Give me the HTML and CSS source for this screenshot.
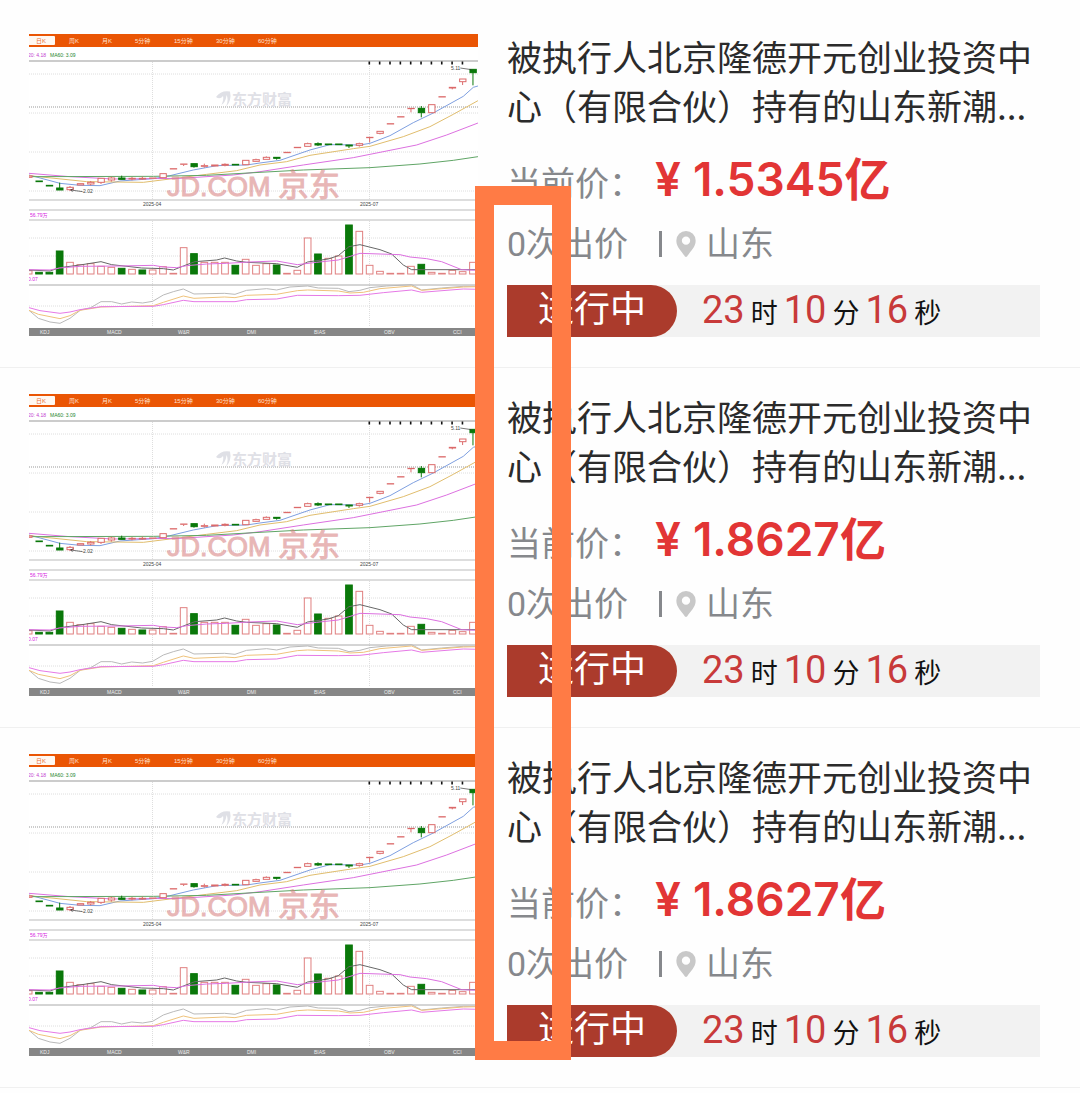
FILE: index.html
```html
<!DOCTYPE html>
<html lang="zh-CN">
<head>
<meta charset="utf-8">
<meta name="viewport" content="width=device-width, initial-scale=1">
<title>司法拍卖</title>
<link rel="stylesheet" href="styles.css">
</head>
<body>
<main class="list">
  <article class="card">
    <div class="chart"></div>
    <div class="info">
      <h2 class="title"><a href="#lot-1">被执行人北京隆德开元创业投资中<br>心（有限合伙）持有的山东新潮...</a></h2>
      <p class="price"><span class="label">当前价：</span><strong class="amount"><span class="yen">¥</span>1.5345<span class="unit">亿</span></strong></p>
      <p class="meta"><span>0次出价</span><span class="divider"></span><svg class="pin" viewBox="0 0 19 25"><path fill-rule="evenodd" d="M9.500 0A9.300 9.300 0 0 0 .2 9.300C.2 15.500 5 19 8.300 24.200Q9.500 25.600 10.700 24.200C14 19 18.800 15.500 18.800 9.300A9.300 9.300 0 0 0 9.500 0ZM9.500 5.300a4 4 0 1 1 0 8a4 4 0 0 1 0-8Z"/></svg><span>山东</span></p>
      <div class="status"><span class="tag">进行中</span><p class="timer"><b>23</b><span>时</span><b>10</b><span>分</span><b>16</b><span>秒</span></p></div>
    </div>
  </article>
  <article class="card">
    <div class="chart"></div>
    <div class="info">
      <h2 class="title"><a href="#lot-2">被执行人北京隆德开元创业投资中<br>心（有限合伙）持有的山东新潮...</a></h2>
      <p class="price"><span class="label">当前价：</span><strong class="amount"><span class="yen">¥</span>1.8627<span class="unit">亿</span></strong></p>
      <p class="meta"><span>0次出价</span><span class="divider"></span><svg class="pin" viewBox="0 0 19 25"><path fill-rule="evenodd" d="M9.500 0A9.300 9.300 0 0 0 .2 9.300C.2 15.500 5 19 8.300 24.200Q9.500 25.600 10.700 24.200C14 19 18.800 15.500 18.800 9.300A9.300 9.300 0 0 0 9.500 0ZM9.500 5.300a4 4 0 1 1 0 8a4 4 0 0 1 0-8Z"/></svg><span>山东</span></p>
      <div class="status"><span class="tag">进行中</span><p class="timer"><b>23</b><span>时</span><b>10</b><span>分</span><b>16</b><span>秒</span></p></div>
    </div>
  </article>
  <article class="card">
    <div class="chart"></div>
    <div class="info">
      <h2 class="title"><a href="#lot-3">被执行人北京隆德开元创业投资中<br>心（有限合伙）持有的山东新潮...</a></h2>
      <p class="price"><span class="label">当前价：</span><strong class="amount"><span class="yen">¥</span>1.8627<span class="unit">亿</span></strong></p>
      <p class="meta"><span>0次出价</span><span class="divider"></span><svg class="pin" viewBox="0 0 19 25"><path fill-rule="evenodd" d="M9.500 0A9.300 9.300 0 0 0 .2 9.300C.2 15.500 5 19 8.300 24.200Q9.500 25.600 10.700 24.200C14 19 18.800 15.500 18.800 9.300A9.300 9.300 0 0 0 9.500 0ZM9.500 5.300a4 4 0 1 1 0 8a4 4 0 0 1 0-8Z"/></svg><span>山东</span></p>
      <div class="status"><span class="tag">进行中</span><p class="timer"><b>23</b><span>时</span><b>10</b><span>分</span><b>16</b><span>秒</span></p></div>
    </div>
  </article>
  <div class="marker"></div>
</main>
<script src="chart.js"></script>
</body>
</html>
```
FILE: styles.css
```css
* {
  box-sizing: border-box;
}

body {
  margin: 0;
  background: #fefefe;
  color: #2b2b2b;
  font-family: Roboto, "Noto Sans CJK SC", sans-serif;
}

h2,
p {
  margin: 0;
  font-weight: 400;
}

.list {
  position: relative;
  padding-top: 8px;
}

.card {
  display: grid;
  grid-template-columns: 449fr 533fr;
  column-gap: 29px;
  align-items: end;
  padding: 23px 40px 30px 29px;
  border-bottom: 1px solid #f0f0f0;
}

/* Chart */
.chart svg {
  display: block;
  width: 100%;
}

.chart text {
  font-family: "Liberation Sans", "Noto Sans CJK SC", sans-serif;
  font-size: 6px;
}

.chart .tab {
  fill: #ffe3d0;
}

.chart .tab-on {
  fill: #e8703a;
}

.chart .small {
  font-size: 5px;
}

.chart .brand {
  font-size: 15px;
  font-weight: 700;
  fill: #dfe0e6;
}

.chart .jd {
  font-size: 27px;
  fill: #d98787;
  stroke: #d98787;
  stroke-width: 1;
  opacity: 0.6;
}

.chart .jd-cn {
  font-size: 31px;
}

/* Lot details */
.info {
  display: flex;
  flex-direction: column;
  min-width: 0;
}

.title {
  font-family: "Noto Sans CJK SC", sans-serif;
  font-size: 35px;
  line-height: 49px;
  white-space: nowrap;
}

.title a {
  color: inherit;
  text-decoration: none;
}

.price {
  display: flex;
  align-items: baseline;
  height: 56px;
  margin-top: 22px;
  line-height: 56px;
  white-space: nowrap;
}

.label {
  width: 148px;
  font-size: 34px;
  color: #86888c;
}

.amount {
  font-family: Inter, "Noto Sans CJK SC", sans-serif;
  font-size: 46px;
  font-weight: 600;
  color: #e23535;
}

.yen {
  margin-right: 12px;
}

.meta {
  display: flex;
  align-items: center;
  height: 48px;
  margin-top: 13px;
  font-size: 34px;
  line-height: 48px;
  color: #86888c;
}

.divider {
  width: 3px;
  height: 26px;
  margin: 0 14px 0 31px;
  background: #86888c;
}

.pin {
  width: 20px;
  height: 26px;
  margin-right: 10px;
  fill: #c8c8c8;
}

.status {
  display: flex;
  height: 52px;
  margin-top: 17px;
  background: #f2f2f2;
}

.tag {
  width: 170px;
  border-radius: 0 26px 26px 0;
  background: #ab3b2c;
  color: #fff;
  font-size: 36px;
  line-height: 50px;
  text-align: center;
}

.timer {
  display: flex;
  align-items: baseline;
  gap: 6px;
  padding-left: 25px;
  line-height: 50px;
  color: #111;
}

.timer b {
  font-size: 38px;
  font-weight: 400;
  color: #c83a3a;
}

.timer span {
  font-size: 27px;
}

/* Hand-drawn highlight across the three lots */
.marker {
  position: absolute;
  top: 186px;
  bottom: 28px;
  left: 475px;
  width: 96px;
  border: 19px solid #ff7b45;
}
```
FILE: chart.js
```js
// Stock chart thumbnail: candles, volume and indicator panes.
const STEP = 31;
const FIRST = 26;
const RED = '#dc6a6a';
const GREEN = '#0a780a';

// [colour, body top, body bottom, wick top, wick bottom]
const candles = [
  ['r',123,127],['g',138,140],['g',151,153],['g',159,165,143,165],['r',157,164,153,168],['r',146,150],
  ['r',142,147,138,151],['r',130,142,130,147],['r',129,135,125,140],['g',129,133,122,133],['r',130,132,126,136],
  ['r',130,132,125,134],['r',129,130],['r',116,128],['r',101,102],['r',87,88,87,93],['g',86,95,86,98],
  ['r',92,94,86,98],['r',90,93],['r',88,91,85,94],['g',88,90],['r',76,89],['r',74,79,71,81],['r',67,73,64,73],
  ['g',67,70,67,74],['r',52,53],['r',37,38],['r',26,34,23,34],['g',26,30,22,33],['g',27,29],['g',27,29],
  ['g',30,33,30,39],['r',26,31,23,35],['r',7,8,7,22],['r',-11,-5,-11,-2],['r',-34,-33],['r',-55,-54],
  ['r',-80,-79,-80,-68],['g',-80,-67,-87,-53],['r',-91,-67],['r',-115,-114],['r',-143,-141,-143,-137],
  ['r',-168,-160,-168,-150],['g',-197,-187,-197,-149]
];

const volumes = [197,-202,-202,-138,172,179,176,184,187,-190,193,-195,195,185,205,128,-146,172,172,172,-181,163,181,
  176,-180,205,196,99,-147,160,153,-60,79,181,199,205,205,184,-178,202,205,196,200,172];

const priceLines = [
  ['#7d9fe0','27,120 120,145 180,151 240,152 300,138 400,131 450,122 520,105 590,92 680,90 720,84 780,76 870,45 930,29 1020,30 1050,25 1110,2 1180,-37 1240,-66 1330,-116 1360,-143 1374,-147'],
  ['#e0bd6c','27,122 200,140 370,142 450,132 560,118 650,107 720,90 800,80 870,61 1000,41 1050,34 1150,5 1230,-25 1300,-62 1374,-103'],
  ['#dc6fe0','27,115 150,125 280,132 480,130 640,120 720,110 850,90 1000,68 1050,58 1190,30 1280,0 1374,-36'],
  ['#5fa565','27,125 400,124 560,121 720,112 850,105 1050,98 1200,87 1300,76 1374,65']
];

const lowerLines = [
  ['#666','27,195 90,198 119,188 180,180 243,170 275,179 330,185 365,189 430,191 460,195 490,183 525,170 590,165 614,159 650,168 680,172 770,176 832,187 863,171 925,162 955,152 987,125 1020,119 1080,134 1115,147 1150,180 1175,194 1374,194'],
  ['#dc6fe0','27,194 90,195 119,189 180,184 300,183 400,181 430,186 470,188 500,182 560,177 620,175 690,171 770,168 832,179 890,172 955,165 1020,145 1140,149 1170,156 1220,161 1265,170 1325,194 1374,196'],
  ['#b9b9b9','27,316 55,340 90,351 120,355 150,340 182,315 212,308 243,290 275,290 305,297 335,291 368,294 398,289 430,270 460,260 490,252 522,267 614,265 645,268 680,256 740,251 770,255 810,246 863,243 895,249 955,250 987,260 1020,256 1050,248 1100,243 1175,239 1205,255 1265,249 1330,244 1374,244'],
  ['#efc27a','27,316 55,328 120,341 150,332 180,316 243,306 400,302 430,292 490,273 522,280 614,276 645,278 680,271 770,268 832,257 863,255 955,258 990,264 1030,262 1080,251 1175,243 1205,256 1330,246 1374,245'],
  ['#e678e6','27,308 60,317 120,325 150,321 180,314 243,305 400,304 430,299 490,286 522,290 645,290 680,284 770,282 832,271 955,272 1020,271 1090,263 1175,255 1205,262 1330,252 1374,253']
];

const lines = set => set.map(([c, p]) =>
  `<polyline points="${p}" fill="none" stroke="${c}" stroke-width="3"/>`).join('');

const drawCandles = candles.map(([c, top, bottom, high, low], i) => {
  const x = FIRST + i * STEP;
  const colour = c === 'g' ? GREEN : RED;
  const wick = high === undefined ? '' : c === 'g'
    ? `M${x} ${high}V${low}` : `M${x} ${high}V${top}M${x} ${bottom}V${low}`;
  return `<path d="${wick}" stroke="${colour}" stroke-width="3"/>` +
    `<rect x="${x - 9}" y="${top}" width="19" height="${bottom - top}" fill="${c === 'g' ? colour : '#fff'}" stroke="${colour}" stroke-width="3"/>`;
}).join('');

const drawVolumes = volumes.map((v, i) => {
  const top = Math.abs(v);
  const fill = v < 0 ? GREEN : '#fff';
  return `<rect x="${FIRST + i * STEP - 10}" y="${top}" width="20" height="${207 - top}" fill="${fill}" stroke="${v < 0 ? GREEN : '#e08080'}" stroke-width="3"/>`;
}).join('');

const rule = (y, colour, width, dash) =>
  `<path d="M0 ${y}H449" stroke="${colour}" stroke-width="${width}"${dash ? ' stroke-dasharray="1 1"' : ''}/>`;

const label = (x, y, text, cls, fill) =>
  `<text x="${x}" y="${y}"${cls ? ` class="${cls}"` : ''}${fill ? ` fill="${fill}"` : ''}>${text}</text>`;

const tabs = [[40,'周K'],[73,'月K'],[106,'5分钟'],[145,'15分钟'],[187,'30分钟'],[229,'60分钟']];
const indicators = [[11,'KDJ'],[78,'MACD'],[149,'W&amp;R'],[218,'DMI'],[285,'BIAS'],[355,'OBV'],[424,'CCI']];
const ticks = Array.from({ length: 10 }, (_, i) =>
  `<rect x="${339.5 + i * 10.35}" y="27.5" width="1.600" height="3" fill="#111"/>`).join('');

const svg = `<svg viewBox="0 0 449 303">
  <rect width="449" height="303" fill="#fff"/>
  <rect width="449" height="13" fill="#ea5504"/>
  <rect x="-2" y="2" width="28" height="9" rx="1" fill="#fff8f2"/>
  ${label(7, 9, '日K', 'tab-on')}${tabs.map(([x, t]) => label(x, 9, t, 'tab')).join('')}
  ${label(-1, 23, '20: 4.18', 'small', '#c33bd0')}${label(21, 23, 'MA60: 3.09', 'small', '#23862b')}
  ${[40, 79, 118, 157, 204, 222, 272].map(y => rule(y, '#dedede', 1, true)).join('')}
  ${rule(73, '#999', 1, true)}
  <path d="M123.500 28V166M340.500 28V166M123.500 187V293M340.500 187V293" stroke="#dedede" stroke-dasharray="1 1"/>
  ${rule(27, '#ccc', 2)}${rule(166, '#bbb', 1)}${rule(176, '#bbb', 1)}${rule(186, '#bbb', 1)}${rule(251, '#aaa', 1)}
  <path d="M187 63Q192 56 201 57.500Q203 66 197 73Q200 65 197.500 61Q197 68 192.500 71Q195 65 194 62Q191 66 187 63Z" fill="#dfe0e6"/>
  ${label(203, 71, '东方财富', 'brand')}
  <g transform="translate(-9 101) scale(.3333)">${lines(priceLines)}${drawCandles}
    <path d="M1321 -201L1355 -196M188 170L152 165M160 161L152 165L158 170" fill="none" stroke="#333" stroke-width="2"/></g>
  ${ticks}
  ${label(422, 36, '5.11', 'small', '#444')}${label(54, 159, '2.02', 'small', '#444')}
  ${label(138, 162, 'JD.COM', 'jd')}${label(249, 162, '京东', 'jd jd-cn')}
  ${label(114, 172, '2025-04', 'small', '#444')}${label(331, 172, '2025-07', 'small', '#444')}
  ${label(1, 183, '56.79万', 'small', '#d61ae0')}${label(-1, 247, '0.07', 'small', '#d61ae0')}
  <g transform="translate(-9 171) scale(.3333)">${drawVolumes}${lines(lowerLines)}</g>
  <rect y="294" width="449" height="8" fill="#868686"/>
  ${indicators.map(([x, t]) => label(x, 300, t, 'small', '#eee')).join('')}
</svg>`;

document.querySelectorAll('.chart').forEach(el => { el.innerHTML = svg; });
```
